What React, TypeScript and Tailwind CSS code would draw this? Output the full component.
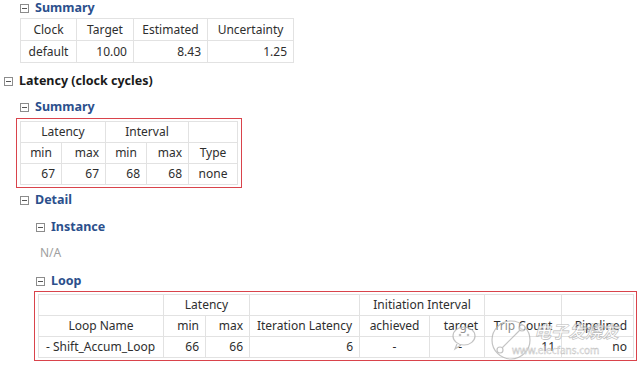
import React from "react";

const FONT = { fontFamily: '"Noto Sans", "Open Sans", Arial, sans-serif' };

function Toggle() {
  return (
    <span className="relative inline-block w-[9px] h-[9px] border border-[#8c8c8c] bg-white shrink-0">
      <span className="absolute left-[1px] right-[1px] top-[3px] h-[1px] bg-[#555]" />
    </span>
  );
}

function Heading({ text, blue = true, className = "" }: { text: string; blue?: boolean; className?: string }) {
  return (
    <div className={"flex items-center h-[14px] gap-[6px] " + className}>
      <Toggle />
      <span className={"text-[12.5px] font-bold leading-[14px] " + (blue ? "text-[#2b4f8c]" : "text-[#1a1a1a]")}>{text}</span>
    </div>
  );
}

const td = "border border-[#e2e2e2] px-[6px] h-[21px] p-0 text-[12px] text-[#2e2e2e] leading-none whitespace-nowrap";

export default function App() {
  return (
    <div className="relative w-[640px] h-[366px] bg-white overflow-hidden pt-[1px]" style={FONT}>
      <div className="pl-[20px]">
        <Heading text="Summary" />
        <table className="mt-[3px] border-collapse table-fixed w-[273px]">
          <colgroup>
            <col className="w-[56px]" />
            <col className="w-[57px]" />
            <col className="w-[74px]" />
            <col className="w-[86px]" />
          </colgroup>
          <tbody>
            <tr>
              <td className={td + " h-[22px] text-center"}>Clock</td>
              <td className={td + " h-[22px] text-center"}>Target</td>
              <td className={td + " h-[22px] text-center"}>Estimated</td>
              <td className={td + " h-[22px] text-center"}>Uncertainty</td>
            </tr>
            <tr>
              <td className={td + " h-[22px] text-center"}>default</td>
              <td className={td + " h-[22px] text-right"}>10.00</td>
              <td className={td + " h-[22px] text-right"}>8.43</td>
              <td className={td + " h-[22px] text-right"}>1.25</td>
            </tr>
          </tbody>
        </table>
      </div>

      <div className="pl-[4px] mt-[11px]">
        <Heading text="Latency (clock cycles)" blue={false} />
      </div>

      <div className="pl-[20px] mt-[12px]">
        <Heading text="Summary" />
      </div>
      <div className="ml-[16px] mt-[4px] w-[226px] border border-[#d9434b] px-[3px] py-[2px]">
        <table className="border-collapse table-fixed w-[217px]">
          <colgroup>
            <col className="w-[41px]" />
            <col className="w-[44px]" />
            <col className="w-[41px]" />
            <col className="w-[42px]" />
            <col className="w-[49px]" />
          </colgroup>
          <tbody>
            <tr>
              <td colSpan={2} className={td + " text-center border-[#9fbfe0]"}>Latency</td>
              <td colSpan={2} className={td + " text-center"}>Interval</td>
              <td className={td}></td>
            </tr>
            <tr>
              <td className={td + " text-center"}>min</td>
              <td className={td + " text-right"}>max</td>
              <td className={td + " text-center"}>min</td>
              <td className={td + " text-right"}>max</td>
              <td className={td + " text-center"}>Type</td>
            </tr>
            <tr>
              <td className={td + " text-right"}>67</td>
              <td className={td + " text-right"}>67</td>
              <td className={td + " text-right"}>68</td>
              <td className={td + " text-right"}>68</td>
              <td className={td + " text-center"}>none</td>
            </tr>
          </tbody>
        </table>
      </div>

      <div className="pl-[20px] mt-[5px]">
        <Heading text="Detail" />
      </div>
      <div className="pl-[36px] mt-[13px]">
        <Heading text="Instance" />
      </div>
      <div className="pl-[40px] mt-[12px] h-[14px] flex items-center text-[12px] text-[#a0a0a0] leading-none">N/A</div>
      <div className="pl-[36px] mt-[14px]">
        <Heading text="Loop" />
      </div>
      <div className="ml-[34px] mt-[3px] w-[603px] border border-[#d9434b] pl-[3px] pr-[2px] py-[2px]">
        <table className="border-collapse table-fixed w-[595px]">
          <colgroup>
            <col className="w-[125px]" />
            <col className="w-[42px]" />
            <col className="w-[44px]" />
            <col className="w-[110px]" />
            <col className="w-[70px]" />
            <col className="w-[55px]" />
            <col className="w-[77px]" />
            <col className="w-[72px]" />
          </colgroup>
          <tbody>
            <tr>
              <td className={td}></td>
              <td colSpan={2} className={td + " text-center"}>Latency</td>
              <td className={td}></td>
              <td colSpan={2} className={td + " text-center"}>Initiation Interval</td>
              <td className={td}></td>
              <td className={td}></td>
            </tr>
            <tr>
              <td className={td + " text-center"}>Loop Name</td>
              <td className={td + " text-right"}>min</td>
              <td className={td + " text-right"}>max</td>
              <td className={td + " text-center"}>Iteration Latency</td>
              <td className={td + " text-center"}>achieved</td>
              <td className={td + " text-right"}>target</td>
              <td className={td + " text-center"}>Trip Count</td>
              <td className={td + " text-right"}>Pipelined</td>
            </tr>
            <tr>
              <td className={td + " text-left pl-[7px]"}>- Shift_Accum_Loop</td>
              <td className={td + " text-right"}>66</td>
              <td className={td + " text-right"}>66</td>
              <td className={td + " text-right"}>6</td>
              <td className={td + " text-center"}>-</td>
              <td className={td + " text-right pr-[22px]"}>-</td>
              <td className={td + " text-right"}>11</td>
              <td className={td + " text-right"}>no</td>
            </tr>
          </tbody>
        </table>
      </div>

      {/* watermark */}
      <div className="absolute left-[448px] top-[314px] w-[190px] h-[50px] pointer-events-none opacity-80">
        <svg width="190" height="50" viewBox="0 0 190 50" className="absolute left-0 top-0">
          <g fill="none" stroke="#b5b5b5" strokeWidth="1.2">
            <ellipse cx="16" cy="22" rx="11" ry="9" fill="rgba(255,255,255,0.6)" />
            <path d="M9 30 L7 35 L13 31" />
            <circle cx="63" cy="26" r="19" fill="rgba(255,255,255,0.55)" />
            <path d="M52 36 L74 14" />
            <circle cx="52" cy="36" r="3" fill="white" />
            <circle cx="74" cy="14" r="3" fill="white" />
          </g>
          <circle cx="12" cy="21" r="1.3" fill="#b5b5b5" />
          <circle cx="20" cy="21" r="1.3" fill="#b5b5b5" />
        </svg>
        <div
          className="absolute left-[86px] top-[8px] text-[17px] font-bold italic leading-none text-white"
          style={{ fontFamily: '"Noto Sans CJK SC", sans-serif', WebkitTextStroke: "0.6px #a9a9a9" }}
        >
          电子发烧友
        </div>
        <div
          className="absolute left-[64px] top-[31px] text-[10px] leading-none text-white"
          style={{ WebkitTextStroke: "0.4px #a9a9a9" }}
        >
          www.elecfans.com
        </div>
      </div>
    </div>
  );
}
